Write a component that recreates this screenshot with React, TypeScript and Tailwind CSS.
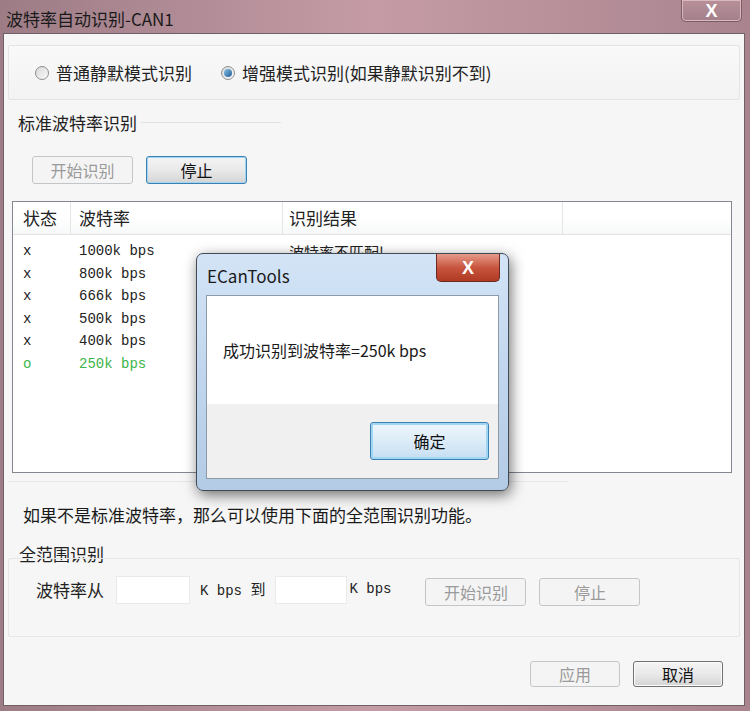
const cn = { fontFamily: '"Noto Sans CJK SC", "Noto Sans", sans-serif' }
const mono = { fontFamily: '"Liberation Mono", "Noto Sans CJK SC", monospace' }

const rows = [
  { s: "x", rate: "1000k bps", res: "波特率不匹配!", ok: false },
  { s: "x", rate: "800k bps", res: "", ok: false },
  { s: "x", rate: "666k bps", res: "", ok: false },
  { s: "x", rate: "500k bps", res: "", ok: false },
  { s: "x", rate: "400k bps", res: "", ok: false },
  { s: "o", rate: "250k bps", res: "", ok: true },
]

const Radio = ({ checked, label }: { checked?: boolean; label: string }) => (
  <div className="flex items-center gap-[7px]">
    <span className="w-[14px] h-[14px] rounded-full border border-[#8e8f8f] bg-gradient-to-br from-[#d8d8d8] to-[#fafafa] flex items-center justify-center">
      {checked && <span className="w-[8px] h-[8px] rounded-full bg-gradient-to-br from-[#86c2ea] to-[#1c5d94]" />}
    </span>
    <span className="text-[17px] text-[#222]">{label}</span>
  </div>
)

const Btn = ({ label, w, h, disabled, focused }: { label: string; w: string; h: string; disabled?: boolean; focused?: boolean }) => {
  if (disabled) {
    return (
      <div className={`${w} ${h} flex items-center justify-center rounded-[3px] border border-[#c3c6c9] bg-[#f4f4f4] text-[16px] text-[#9a9a9a]`}>
        {label}
      </div>
    )
  }
  return (
    <div
      className={`${w} ${h} flex items-center justify-center rounded-[3px] border ${
        focused ? "border-[#3c7fb1] shadow-[inset_0_0_0_1px_#9ed6f3]" : "border-[#707070] shadow-[inset_0_0_0_1px_#fcfcfc]"
      } bg-gradient-to-b from-[#f4f4f4] via-[#e9e9e9] to-[#d4d4d4] text-[16px] text-[#111]`}
    >
      {label}
    </div>
  )
}

export default function App() {
  return (
    <div className="relative w-[750px] h-[711px] overflow-hidden bg-gradient-to-r from-[#9d7c86] via-[#c59ca6] to-[#a9848e]" style={cn}>
      {/* title bar */}
      <div className="h-[33px] flex items-start justify-between pl-[6px] pr-[8px]">
        <span className="mt-[6px] text-[17px] text-[#1a1a1a]">波特率自动识别-CAN1</span>
        <div className="w-[61px] h-[22px] rounded-b-[5px] border border-t-0 border-[#7d5c66] bg-gradient-to-b from-[#b89099] to-[#a3808a] flex items-center justify-center shadow-[inset_0_0_0_1px_#d8b9c0]">
          <span className="text-white text-[18px] font-bold leading-none" style={{ fontFamily: '"Liberation Sans", sans-serif' }}>X</span>
        </div>
      </div>

      {/* client area */}
      <div className="h-[673px] ml-[3px] mr-[5px] border border-[#6f6066] bg-[#f6f6f6] flex flex-col">
        {/* radio group */}
        <div className="mt-[11px] mx-[4px] h-[55px] border border-[#e4e4e4] rounded-[2px] bg-gradient-to-b from-[#f9f9f9] to-[#f3f3f3] flex items-center gap-[29px] pl-[26px]">
          <Radio label="普通静默模式识别" />
          <Radio checked label="增强模式识别(如果静默识别不到)" />
        </div>

        {/* standard group */}
        <div className="mt-[10px] flex items-center">
          <span className="ml-[14px] text-[17px] text-[#222]">标准波特率识别</span>
          <span className="ml-[4px] w-[140px] h-px bg-[#e2e2e2]" />
        </div>
        <div className="mt-[20px] ml-[28px] flex gap-[13px]">
          <Btn label="开始识别" w="w-[101px]" h="h-[28px]" disabled />
          <Btn label="停止" w="w-[101px]" h="h-[28px]" focused />
        </div>

        {/* list view */}
        <div className="mt-[17px] ml-[8px] w-[720px] h-[272px] border border-[#828790] bg-white flex flex-col">
          <div className="h-[33px] flex border-b border-[#e3e3e3] bg-gradient-to-b from-white from-50% to-[#f7f8f9] text-[17px] text-[#222]">
            <div className="w-[58px] pl-[10px] flex items-center border-r border-[#e5e5e5]">状态</div>
            <div className="w-[212px] pl-[8px] flex items-center border-r border-[#e5e5e5]">波特率</div>
            <div className="w-[280px] pl-[6px] flex items-center border-r border-[#e5e5e5]">识别结果</div>
            <div className="flex-1" />
          </div>
          <div className="pt-[6px]">
            {rows.map((r) => (
              <div key={r.rate} className={`h-[22.5px] flex items-center text-[14px] ${r.ok ? "text-[#3db54a]" : "text-[#222]"}`} style={mono}>
                <span className="w-[66px] pl-[10px]">{r.s}</span>
                <span className="w-[210px]">{r.rate}</span>
                <span className="text-[15px]" style={cn}>{r.res}</span>
              </div>
            ))}
          </div>
        </div>
        <div className="mt-[8px] ml-[4px] w-[560px] h-px bg-[#e6e6e6]" />

        <div className="mt-[20px] ml-[19px] text-[17px] text-[#1a1a1a]">如果不是标准波特率，那么可以使用下面的全范围识别功能。</div>

        {/* full range group */}
        <div className="mt-[17px] ml-[15px] text-[17px] text-[#222] leading-[20px]">全范围识别</div>
        <div className="-mt-[6px] mx-[4px] h-[79px] border border-[#e6e6e6] rounded-[2px] flex items-center pl-[27px] pt-[4px] pb-[20px] text-[#222]">
          <span className="text-[17px]">波特率从</span>
          <span className="ml-[12px] w-[74px] h-[28px] bg-white border border-[#eaeaea]" />
          <span className="ml-[10px] text-[14px]" style={mono}>K bps <span style={cn} className="text-[15px]">到</span></span>
          <span className="ml-[10px] w-[72px] h-[28px] bg-white border border-[#eaeaea]" />
          <span className="ml-[2px] text-[14px]" style={mono}>K bps</span>
          <div className="ml-[34px] mt-[4px] flex gap-[13px]">
            <Btn label="开始识别" w="w-[101px]" h="h-[28px]" disabled />
            <Btn label="停止" w="w-[101px]" h="h-[28px]" disabled />
          </div>
        </div>

        {/* bottom buttons */}
        <div className="mt-[24px] flex justify-end gap-[13px] pr-[21px]">
          <Btn label="应用" w="w-[90px]" h="h-[26px]" disabled />
          <Btn label="取消" w="w-[90px]" h="h-[26px]" />
        </div>
      </div>

      {/* message box */}
      <div className="absolute left-[196px] top-[253px] w-[313px] h-[238px] rounded-[7px] border border-[#3f4a55] bg-gradient-to-b from-[#d3e4f6] via-[#c1d6ee] to-[#b4cbe6] shadow-[2px_4px_14px_rgba(0,0,0,0.55)]">
        <div className="h-[41px] flex items-start justify-between pl-[10px] pr-[8px]">
          <span className="mt-[9px] text-[17px] text-[#1a1a1a]">ECanTools</span>
          <div className="w-[64px] h-[28px] rounded-b-[5px] border border-t-0 border-[#6b2a22] bg-gradient-to-b from-[#e59a8a] via-[#c8553e] to-[#b03a22] flex items-center justify-center">
            <span className="text-white text-[18px] font-bold leading-none" style={{ fontFamily: '"Liberation Sans", sans-serif' }}>X</span>
          </div>
        </div>
        <div className="mx-[9px] h-[184px] border border-[#8d9aa8] flex flex-col">
          <div className="h-[108px] bg-white flex items-center pl-[16px] text-[16px] text-[#1a1a1a]">成功识别到波特率=250k bps</div>
          <div className="flex-1 bg-[#f0f0f0] flex items-start justify-end pr-[9px] pt-[18px]">
            <div className="w-[119px] h-[38px] rounded-[3px] border border-[#3c7fb1] shadow-[inset_0_0_0_2px_#9ed6f3] bg-gradient-to-b from-[#eef6fc] via-[#dcecf8] to-[#c6def2] flex items-center justify-center text-[16px] text-[#111]">
              确定
            </div>
          </div>
        </div>
      </div>
    </div>
  )
}
